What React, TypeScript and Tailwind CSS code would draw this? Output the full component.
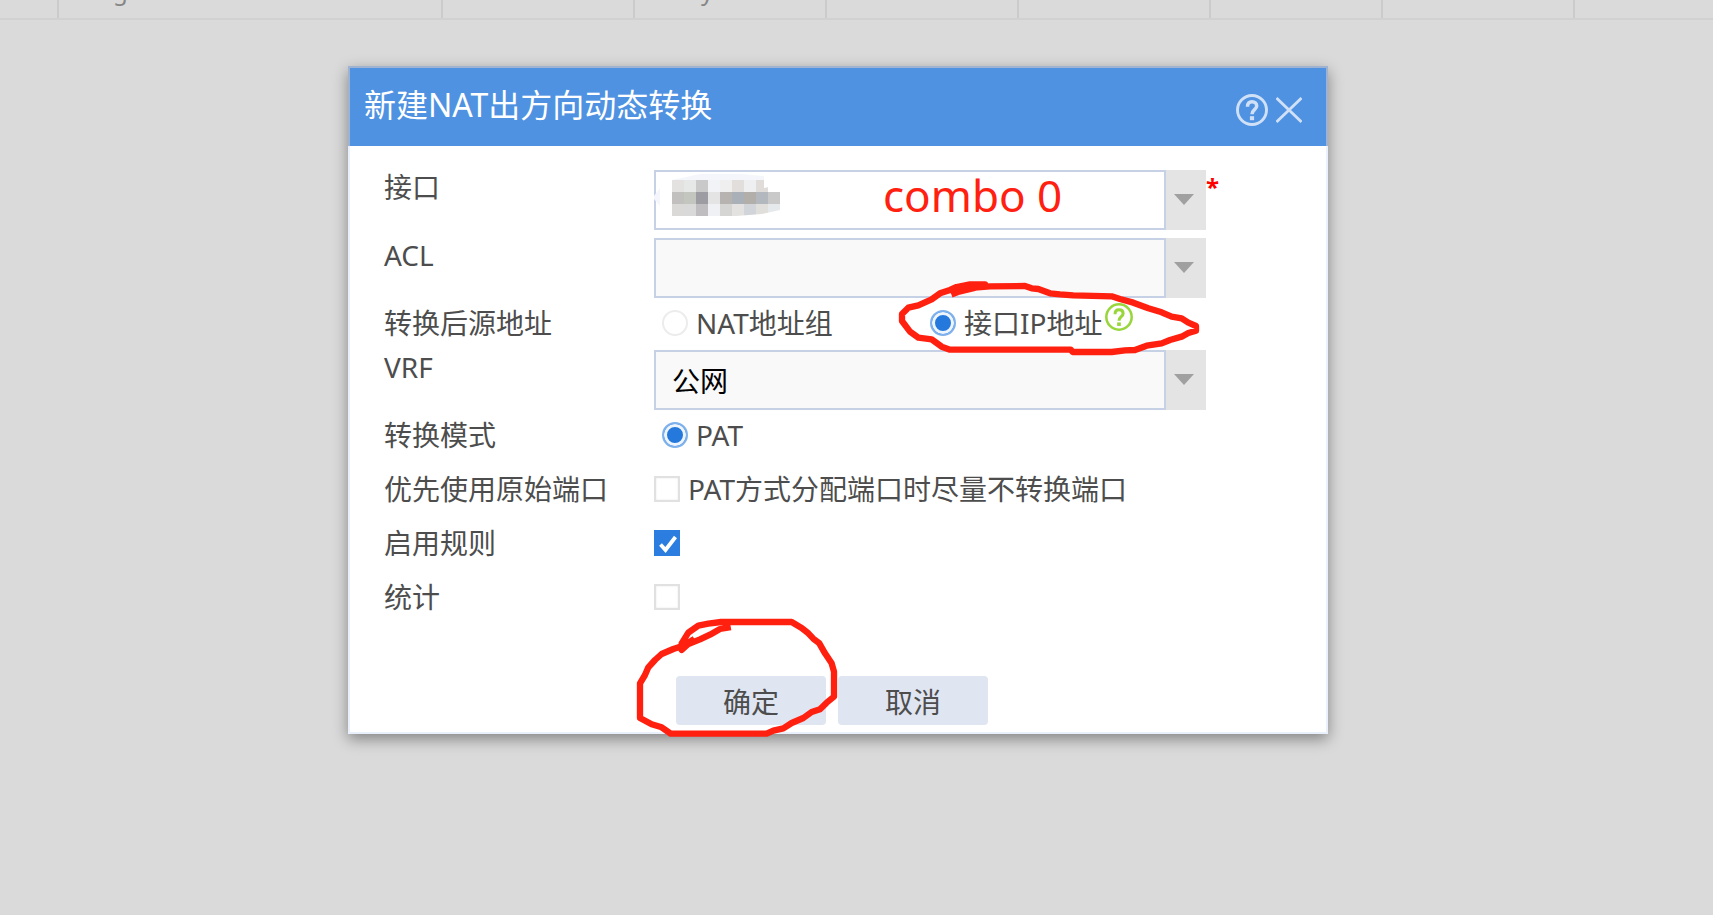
import React from "react";

const COLUMNS = [
  { width: "w-[59px]", text: "" },
  { width: "w-[384px]", text: "g" },
  { width: "w-[192px]", text: "" },
  { width: "w-[192px]", text: "y" },
  { width: "w-[192px]", text: "" },
  { width: "w-[192px]", text: "" },
  { width: "w-[172px]", text: "" },
  { width: "w-[192px]", text: "" },
];

// censored value, one entry per 12px tile
const MOSAIC = [
  ["#e3e2e1", "#e5e8e7", "#c9c9c9", "#f1f3f6", "#efefef", "#e1dedc", "#edeff1", "#dfdcda", "#ffffff"],
  ["#c1c0be", "#c3c5bf", "#9d9ca3", "#e4e4e5", "#b7b3b0", "#aab0b7", "#b2aeaa", "#b3b8bf", "#c9c9c9"],
  ["#dad9d8", "#d9d9da", "#c0bdc0", "#eff1f5", "#d5d5d4", "#e3e2e0", "#d1d4d8", "#e1dfdc", "#e6e9ec"],
];

function HelpIcon({ className }: { className: string }) {
  return (
    <svg viewBox="0 0 32 32" fill="none" stroke="currentColor" className={className} aria-hidden="true">
      <circle cx="16" cy="16" r="14.5" strokeWidth="2.9" />
      <path d="M11.500 12.800c0-3.300 1.800-5 4.500-5s4.700 1.600 4.700 4.200c0 3.600-4.700 3.800-4.700 8.200" strokeWidth="3.500" />
      <path d="M16 22.200v4" strokeWidth="4.200" />
    </svg>
  );
}

function Row({
  label,
  htmlFor,
  tall,
  children,
}: {
  label: string;
  htmlFor: string;
  tall?: boolean;
  children: React.ReactNode;
}) {
  return (
    <div className={tall ? "flex items-start min-h-[46px]" : "flex items-start min-h-9"}>
      <label htmlFor={htmlFor} className="w-[270px] shrink-0 leading-[34px]">
        {label}
      </label>
      <div className="min-w-0 flex-1">{children}</div>
    </div>
  );
}

function Select({
  id,
  options,
  className,
  children,
}: {
  id: string;
  options: string[];
  className: string;
  children?: React.ReactNode;
}) {
  return (
    <div className="relative flex h-[60px] w-full max-w-[552px]">
      <select
        id={id}
        className={`min-w-0 flex-1 appearance-none border-2 border-[#c6d1e6] pt-0.5 pl-4 text-black outline-none ${className}`}
      >
        {options.map((o) => (
          <option key={o}>{o}</option>
        ))}
      </select>
      <span className="flex w-10 items-center justify-center bg-[#e4e4e4] pr-1 pb-0.5" aria-hidden="true">
        <svg viewBox="0 0 20 11" className="h-[11px] w-5">
          <path d="M0 0h20L10 11z" fill="#a0a0a0" />
        </svg>
      </span>
      {children}
    </div>
  );
}

function Radio({ id, name, checked }: { id: string; name: string; checked?: boolean }) {
  return (
    <input
      id={id}
      type="radio"
      name={name}
      defaultChecked={checked}
      className="size-[26px] shrink-0 appearance-none rounded-full border-2 border-[#ececec] bg-white checked:border-[#7fb1ec] checked:bg-[#2579dd] checked:shadow-[inset_0_0_0_3px_#eef5fd]"
    />
  );
}

function Checkbox({ id, checked }: { id: string; checked?: boolean }) {
  return (
    <span className="relative size-[26px] shrink-0">
      <input
        id={id}
        type="checkbox"
        defaultChecked={checked}
        className="peer block size-[26px] appearance-none border-2 border-[#e1e1e1] bg-white shadow-[inset_0_0_2px_#e4e4e4] checked:border-[#2b7de0] checked:bg-[#2b7de0] checked:shadow-none"
      />
      <svg
        viewBox="0 0 26 26"
        fill="none"
        className="pointer-events-none absolute inset-0 hidden size-[26px] peer-checked:block"
        aria-hidden="true"
      >
        <path d="M6.500 14.500l5 5.500L21.500 7" stroke="#fff" strokeWidth="3.800" />
      </svg>
    </span>
  );
}

function Annotations() {
  return (
    <div className="pointer-events-none absolute inset-0 text-[#ff2010]">
      <svg
        viewBox="0 0 1140 660"
        fill="none"
        stroke="currentColor"
        strokeWidth="19"
        strokeLinejoin="round"
        strokeLinecap="square"
        className="absolute top-[94px] left-[512px] h-[220px] w-[380px]"
      >
        <path d="M283 400L325 384L390 379L495 378L515 385L535 387L570 400L600 403L640 406L755 409L780 417L820 428L865 445L905 457L935 470L965 475L985 488L1008 498V512L985 519L965 530L930 540L905 550L860 557L825 570L795 571L755 576H638L632 569H270L245 560L215 538L175 533L150 515L126 483V462L145 443L175 436L215 418L240 400L270 390L290 381L330 373H375L350 382L300 394" />
      </svg>
      <svg
        viewBox="0 0 1200 480"
        fill="none"
        stroke="currentColor"
        strokeWidth="19"
        strokeLinejoin="round"
        strokeLinecap="square"
        className="absolute top-[534px] left-[272px] h-40 w-[400px]"
      >
        <path d="M323 83L300 87L270 104L240 118L205 132L185 150V130L205 98L235 77L265 71L303 66H515L545 84L565 100L580 116L598 130L615 160L635 190L642 215V290L620 308L600 328L575 336L550 354L515 369L490 385L460 392L440 401H152L125 382L95 373L60 354V250L75 225L85 202L105 180L125 162L160 147L190 137L215 122" />
      </svg>
    </div>
  );
}

export default function App() {
  return (
    <div className="min-h-screen overflow-hidden bg-[#dadada] font-['Noto_Sans','Noto_Sans_CJK_SC',sans-serif] text-[28px] text-[#4d4d4d]">
      <div className="flex h-5 overflow-hidden border-b-2 border-[#d1d1d1]">
        {COLUMNS.map((c, i) => (
          <div
            key={i}
            className={`flex h-[18px] shrink-0 items-end overflow-hidden border-r-2 border-[#cbcbcb] text-2xl leading-[18px] text-[#868686] ${c.text === "y" ? "pl-[66px]" : "pl-[54px]"} ${c.width}`}
          >
            <span className="pb-[18px]">{c.text}</span>
          </div>
        ))}
      </div>

      <main className="flex justify-center pt-[46px] pr-[37px]">
        <section
          role="dialog"
          aria-labelledby="dialog-title"
          className="relative w-full max-w-[980px] bg-white shadow-[0_5px_14px_rgba(0,0,0,0.4)]"
        >
          <header className="flex h-20 items-center justify-between border-2 border-b-0 border-[#9fb2cf] bg-[#4f92e1] pr-6 pl-3.5">
            <h1 id="dialog-title" className="pb-1 text-[32px] leading-10 text-white">
              新建NAT出方向动态转换
            </h1>
            <div className="flex items-center gap-2 pt-1.5 text-[#d0e1f7]">
              <button type="button" aria-label="帮助">
                <HelpIcon className="size-8" />
              </button>
              <button type="button" aria-label="关闭">
                <svg viewBox="0 0 26 26" fill="none" stroke="currentColor" strokeWidth="2.800" className="size-[26px]">
                  <path d="M.5 1l25 24M25.500 1l-25 24" />
                </svg>
              </button>
            </div>
          </header>

          <form className="border-2 border-t-0 border-[#e9effb] pt-6 pb-[7px] pl-[34px]">
            <div className="flex flex-col gap-2">
              <Row label="接口" htmlFor="iface">
                <Select id="iface" options={[""]} className="bg-white">
                  <svg viewBox="0 0 108 42" className="absolute top-1 left-[18px] h-[42px] w-[108px]" aria-hidden="true">
                    <path d="M0 6L28 0h40l24 2v12l16-3v10H0z" fill="#f4f6fb" />
                    {MOSAIC.map((line, y) =>
                      line.map((fill, x) => (
                        <rect key={`${x}-${y}`} x={x * 12} y={6 + y * 12} width="12" height="12" fill={fill} />
                      ))
                    )}
                    <path d="M92 6h16v5l-16 3zM108 36L90 40l-26 2h44z" fill="#fff" />
                  </svg>
                  <svg viewBox="0 0 6 18" className="absolute top-[18px] left-0 h-[18px] w-1.5" aria-hidden="true">
                    <path d="M6 0v18L0 11V8z" fill="#f4f6fb" />
                  </svg>
                  <span className="pointer-events-none absolute top-0 left-[229px] text-[44px] leading-[50px] text-[#ff2010]">
                    combo 0
                  </span>
                  <span className="absolute top-0.5 left-full text-2xl leading-[30px] font-bold text-[#ff0000]">*</span>
                </Select>
              </Row>

              <Row label="ACL" htmlFor="acl">
                <Select id="acl" options={[""]} className="bg-[#f9f9f9]" />
              </Row>

              <Row label="转换后源地址" htmlFor="addr-group">
                <div className="flex h-[34px] items-center pl-2">
                  <div className="flex w-[268px] items-center gap-2">
                    <Radio id="addr-group" name="addr" />
                    <label htmlFor="addr-group" className="leading-[34px]">
                      NAT地址组
                    </label>
                  </div>
                  <div className="flex items-center gap-2">
                    <Radio id="addr-iface" name="addr" checked />
                    <label htmlFor="addr-iface" className="leading-[34px]">
                      接口IP地址
                    </label>
                  </div>
                  <HelpIcon className="mb-3 ml-[3px] size-7 text-[#98d63c]" />
                </div>
              </Row>

              <Row label="VRF" htmlFor="vrf">
                <Select id="vrf" options={["公网"]} className="bg-[#f9f9f9]" />
              </Row>

              <Row label="转换模式" htmlFor="mode-pat" tall>
                <div className="flex h-[34px] items-center gap-2 pl-2">
                  <Radio id="mode-pat" name="mode" checked />
                  <label htmlFor="mode-pat" className="leading-[34px]">
                    PAT
                  </label>
                </div>
              </Row>

              <Row label="优先使用原始端口" htmlFor="keep-port" tall>
                <div className="flex h-[34px] items-center gap-2">
                  <Checkbox id="keep-port" />
                  <label htmlFor="keep-port" className="leading-[34px]">
                    PAT方式分配端口时尽量不转换端口
                  </label>
                </div>
              </Row>

              <Row label="启用规则" htmlFor="enable" tall>
                <div className="flex h-[34px] items-center">
                  <Checkbox id="enable" checked />
                </div>
              </Row>

              <Row label="统计" htmlFor="stats" tall>
                <div className="flex h-[34px] items-center">
                  <Checkbox id="stats" />
                </div>
              </Row>
            </div>

            <div className="mt-[50px] flex gap-3 pl-[292px]">
              <button type="button" className="h-[49px] w-[150px] rounded bg-[#dfe5f1] pt-0.5 leading-10">
                确定
              </button>
              <button type="button" className="h-[49px] w-[150px] rounded bg-[#dfe5f1] pt-0.5 leading-10">
                取消
              </button>
            </div>
          </form>

          <Annotations />
        </section>
      </main>
    </div>
  );
}
